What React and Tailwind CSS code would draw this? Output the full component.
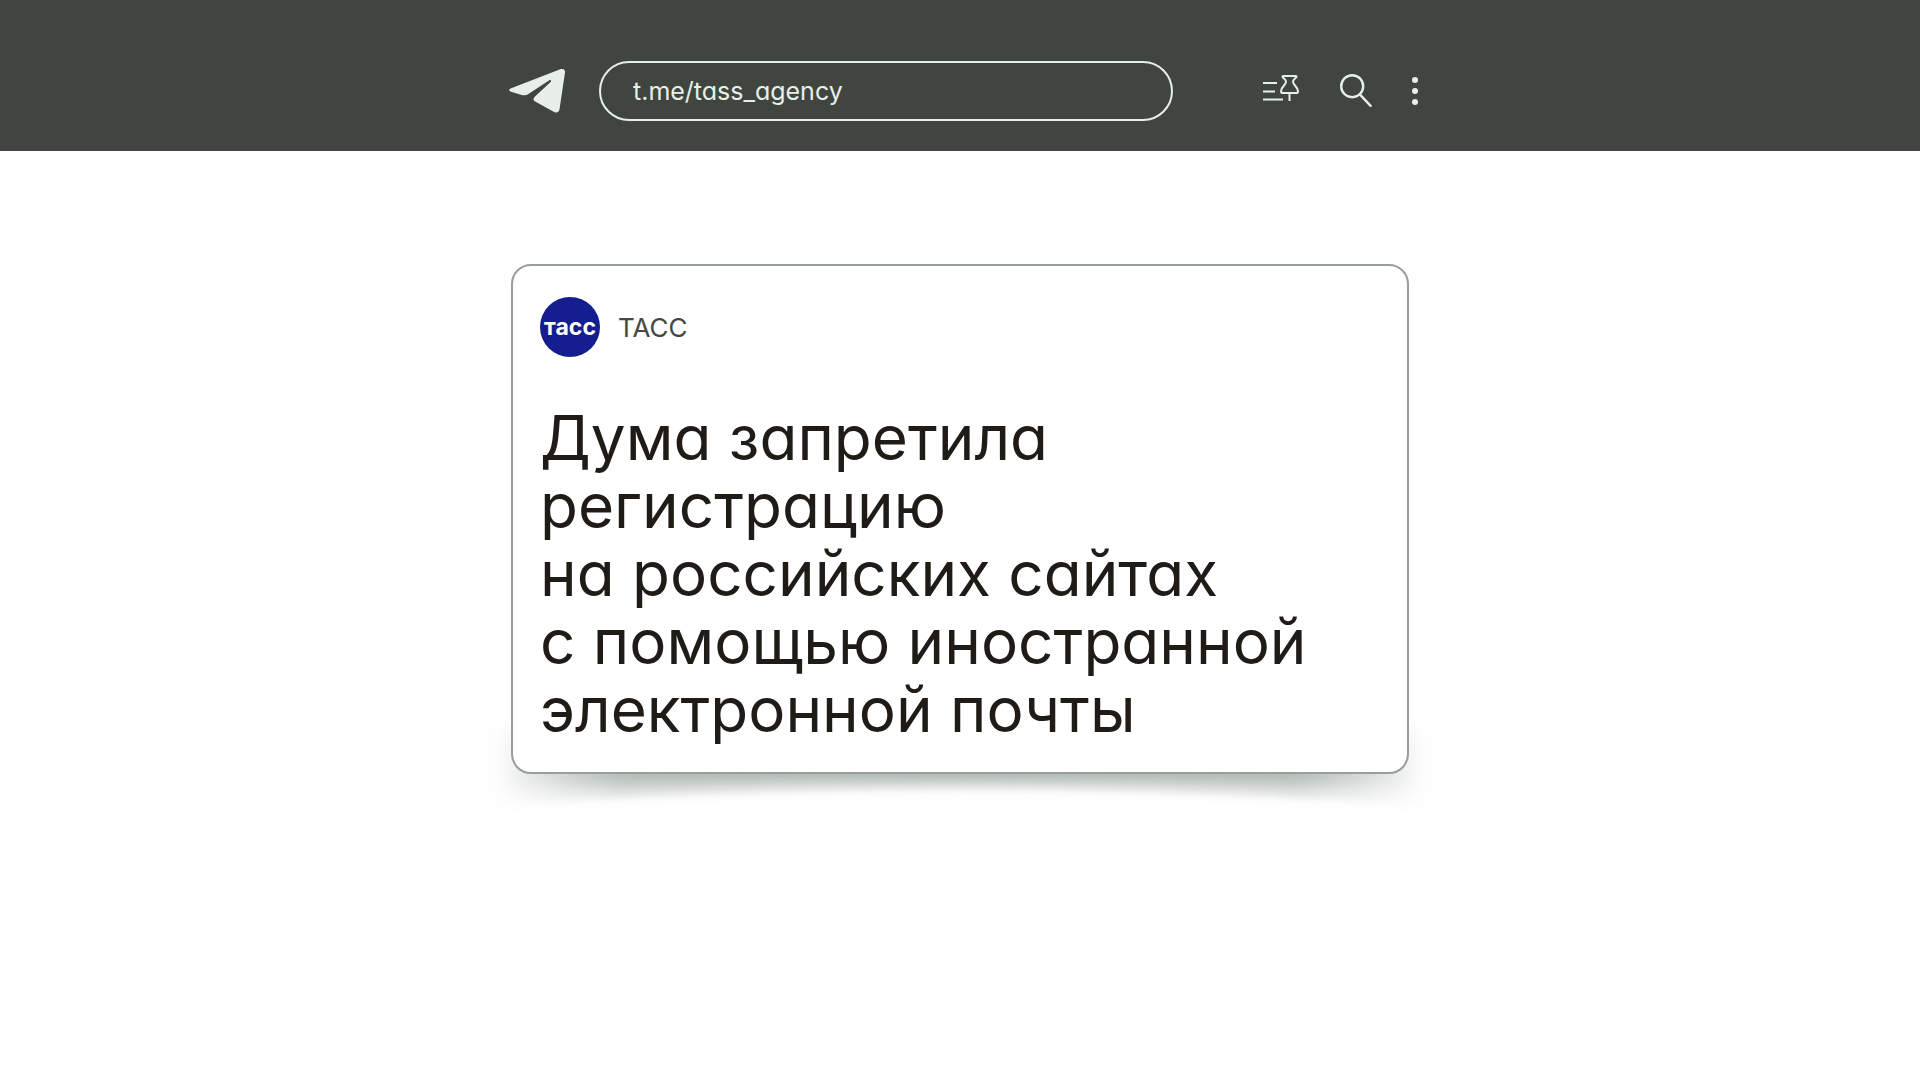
import React, { useState } from "react";

const headline = [
  "Дума запретила",
  "регистрацию",
  "на российских сайтах",
  "с помощью иностранной",
  "электронной почты",
];

function PlaneIcon() {
  return (
    <svg width="58" height="46" viewBox="0 0 58 46" fill="currentColor" aria-hidden="true">
      <path d="M2.6 20.6 52.2 1.3C55.2.2 57.4 1.6 57 4.6L51.6 40.8C51 44.6 48.6 45.6 45.2 43.6L27.2 33.4C24.8 32 25 30.4 27 28.4L42.6 14C43.8 12.6 42.8 11.4 41 12.6L20.4 26C18.6 27.3 16.2 27.6 13.8 26.9L3 23.8C.6 23 .6 21.4 2.6 20.6Z" />
    </svg>
  );
}

function PinListIcon() {
  return (
    <svg width="37" height="34" viewBox="0 0 37 34" fill="none" stroke="currentColor" strokeWidth="2" strokeLinejoin="round" aria-hidden="true">
      <path d="M0 9H14M0 17.5H12M0 25.5H20M26.5 19V27" />
      <path d="M20.3 2H32.7Q33.8 2 33.4 3C32.8 4.4 30 5.4 30 7.6C30 11.6 35 12.6 35 17.2Q35 19 33.4 19H19.6Q18 19 18 17.2C18 12.6 23 11.6 23 7.6C23 5.4 20.2 4.4 19.6 3Q19.2 2 20.3 2Z" />
    </svg>
  );
}

function SearchIcon() {
  return (
    <svg width="32" height="34" viewBox="0 0 32 34" fill="none" stroke="currentColor" strokeWidth="2.4" strokeLinecap="round" aria-hidden="true">
      <circle cx="12.2" cy="12.2" r="11" />
      <path d="M19.8 20.4 30.6 31.8" />
    </svg>
  );
}

function DotsIcon() {
  return (
    <svg width="6" height="28" viewBox="0 0 6 28" fill="currentColor" aria-hidden="true">
      <circle cx="3" cy="3" r="3" />
      <circle cx="3" cy="14" r="3" />
      <circle cx="3" cy="25" r="3" />
    </svg>
  );
}

// curved paper shadow: deeper at the corners, shallow in the middle
function CardShadow() {
  return (
    <svg
      className="absolute -right-6 -bottom-12 -left-6 h-32 w-[calc(100%+48px)]"
      viewBox="0 0 948 128"
      preserveAspectRatio="none"
      aria-hidden="true"
    >
      <defs>
        <linearGradient id="fade" x1="0" x2="1" y1="0" y2="0">
          <stop offset="0" stopColor="#8f9a93" stopOpacity="0" />
          <stop offset="0.04" stopColor="#8f9a93" stopOpacity="0.22" />
          <stop offset="0.14" stopColor="#8f9a93" stopOpacity="0.74" />
          <stop offset="0.5" stopColor="#8f9a93" stopOpacity="0.8" />
          <stop offset="0.86" stopColor="#8f9a93" stopOpacity="0.74" />
          <stop offset="0.96" stopColor="#8f9a93" stopOpacity="0.22" />
          <stop offset="1" stopColor="#8f9a93" stopOpacity="0" />
        </linearGradient>
        <filter id="soft" x="-5%" y="-30%" width="110%" height="160%">
          <feGaussianBlur stdDeviation="8 4" />
        </filter>
      </defs>
      {/* stacked layers thin the shadow out towards its lower edge */}
      <g fill="url(#fade)" filter="url(#soft)">
        <path d="M10 44H938V88Q474 80 10 88Z" opacity="0.4" />
        <path d="M10 38H938V98Q474 78 10 98Z" opacity="0.4" />
        <path d="M6 32H942V111Q474 79 6 111Z" opacity="0.4" />
      </g>
    </svg>
  );
}

export default function App() {
  const [address, setAddress] = useState("t.me/tass_agency");

  return (
    <div className="min-h-screen bg-white font-['Inter',sans-serif] [font-feature-settings:'cv11']">
      <header className="bg-[#40453f] pt-[61px] pb-[30px] text-[#e8efe9]">
        <div className="mx-auto flex max-w-[928px] items-center pr-[6px] pl-3">
          <a href="#home" aria-label="Telegram">
            <PlaneIcon />
          </a>
          <input
            type="text"
            aria-label="Адрес канала"
            value={address}
            onChange={(e) => setAddress(e.target.value)}
            className="mr-[90px] ml-[33px] h-[60px] min-w-0 flex-1 rounded-full border-2 border-[#e8efe9] bg-transparent px-8 text-[25px] outline-none"
          />
          <div className="flex items-center gap-10">
            <button type="button" aria-label="Закреплённые">
              <PinListIcon />
            </button>
            <button type="button" aria-label="Поиск">
              <SearchIcon />
            </button>
            <button type="button" aria-label="Меню">
              <DotsIcon />
            </button>
          </div>
        </div>
      </header>

      <main className="mx-auto max-w-[898px] pt-[113px] pb-20">
        <div className="relative">
          <CardShadow />
          <article className="relative rounded-[20px] border-2 border-[#989f99] bg-white px-[27px] pt-[31px] pb-7">
            <div className="flex items-center gap-[18px]">
              <div className="grid h-[60px] w-[60px] place-items-center rounded-full bg-[#141e8f] text-[23px] leading-none font-bold text-white [font-feature-settings:normal]">
                тасс
              </div>
              <span className="text-[26px] text-[#454842]">ТАСС</span>
            </div>
            <h1 className="mt-[47px] text-[62px] leading-[68px] text-[#1f1b16]">
              {headline.map((line) => (
                <span key={line} className="block">
                  {line}
                </span>
              ))}
            </h1>
          </article>
        </div>
      </main>
    </div>
  );
}
